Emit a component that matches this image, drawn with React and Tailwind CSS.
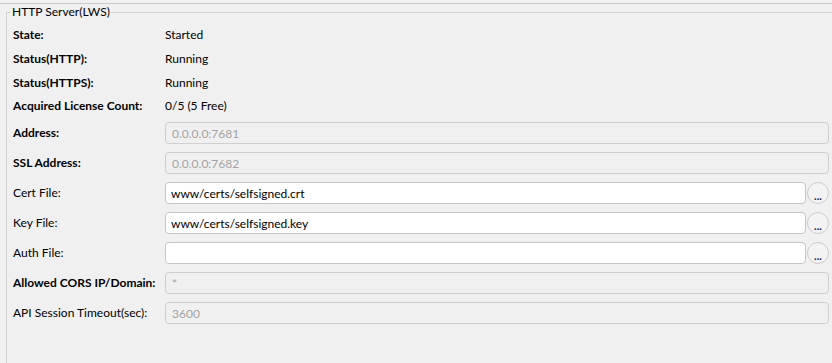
import React from "react";

const statusRows = [
  { label: "State:", value: "Started", h: "h-[24px]" },
  { label: "Status(HTTP):", value: "Running", h: "h-[24px]" },
  { label: "Status(HTTPS):", value: "Running", h: "h-[23px]" },
  { label: "Acquired License Count:", value: "0/5 (5 Free)", h: "h-[24px]" },
];

const fieldRows = [
  { label: "Address:", value: "0.0.0.0:7681", bold: true, disabled: true },
  { label: "SSL Address:", value: "0.0.0.0:7682", bold: true, disabled: true },
  { label: "Cert File:", value: "www/certs/selfsigned.crt", browse: true },
  { label: "Key File:", value: "www/certs/selfsigned.key", browse: true },
  { label: "Auth File:", value: "", browse: true },
  { label: "Allowed CORS IP/Domain:", value: "*", bold: true, disabled: true },
  { label: "API Session Timeout(sec):", value: "3600", disabled: true },
];

function FieldRow({ row }) {
  return (
    <div className="flex h-[30px] items-center">
      <div className={`w-[152px] shrink-0 ${row.bold ? "font-bold" : ""}`}>{row.label}</div>
      <div className="flex flex-1 items-center pr-[3px]">
        <input
          type="text"
          readOnly
          value={row.value}
          disabled={row.disabled}
          className={
            row.disabled
              ? "h-[22px] w-full min-w-0 rounded-[4px] border border-[#cfcfcf] bg-[#f0f0f0] pl-[6px] text-[12px] text-[#a3a3a3] outline-none"
              : "h-[22px] w-full min-w-0 rounded-[4px] border border-[#c5c5c5] bg-white pl-[5px] text-[12px] text-black outline-none"
          }
        />
        {row.browse && (
          <button
            type="button"
            className="ml-[1px] flex h-[22px] w-[22px] shrink-0 items-end justify-center rounded-full border border-[#cccccc] bg-[#f3f3f3] pb-[2px] text-[11px] leading-[11px] font-bold text-[#1a1a5a]"
          >
            ...
          </button>
        )}
      </div>
    </div>
  );
}

export default function App() {
  return (
    <div
      className="h-[363px] w-[832px] overflow-hidden bg-[#f0f0f0] text-[12px] leading-[16px] text-black"
      style={{ fontFamily: "Lato, 'Noto Sans', sans-serif" }}
    >
      <div className="h-[4px] border-b border-[#cacaca]" />
      <fieldset className="ml-[6px] h-[380px] border-l border-t border-[#d3d3d3] pl-[6px]">
        <legend className="-ml-[2px] px-[1px] leading-[16px]">HTTP Server(LWS)</legend>
        <div className="pt-[3px]">
          {statusRows.map((r) => (
            <div key={r.label} className={`flex items-center ${r.h}`}>
              <div className="w-[152px] shrink-0 font-bold">{r.label}</div>
              <div>{r.value}</div>
            </div>
          ))}
          {fieldRows.map((r) => (
            <FieldRow key={r.label} row={r} />
          ))}
        </div>
      </fieldset>
    </div>
  );
}
